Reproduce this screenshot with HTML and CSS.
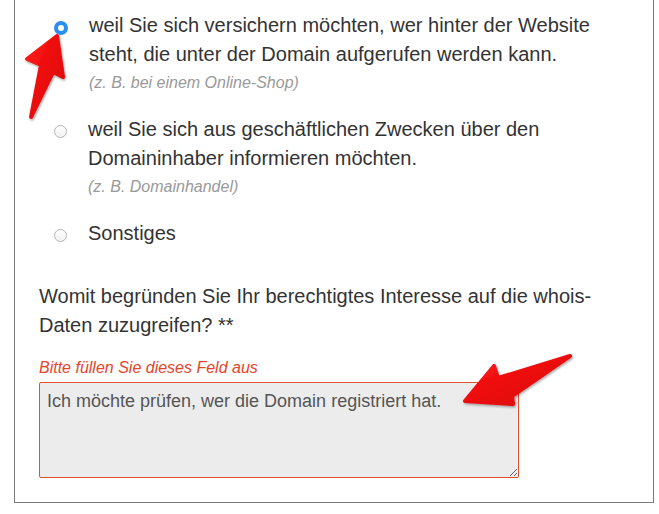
FILE: index.html
```html
<!DOCTYPE html>
<html lang="de">
<head>
<meta charset="utf-8">
<title>Whois</title>
<link rel="stylesheet" href="styles.css">
</head>
<body>
<div class="panel">
  <ul class="options">
    <li class="option">
      <span class="radio checked"></span>
      <div class="label">
        <div class="text">weil Sie sich versichern möchten, wer hinter der Website steht, die unter der Domain aufgerufen werden kann.</div>
        <div class="hint">(z. B. bei einem Online-Shop)</div>
      </div>
    </li>
    <li class="option">
      <span class="radio"></span>
      <div class="label">
        <div class="text">weil Sie sich aus geschäftlichen Zwecken über den Domaininhaber informieren möchten.</div>
        <div class="hint">(z. B. Domainhandel)</div>
      </div>
    </li>
    <li class="option">
      <span class="radio"></span>
      <div class="label">
        <div class="text">Sonstiges</div>
      </div>
    </li>
  </ul>
  <p class="question">Womit begründen Sie Ihr berechtigtes Interesse auf die whois-Daten zuzugreifen? **</p>
  <p class="error">Bitte füllen Sie dieses Feld aus</p>
  <textarea class="field">Ich möchte prüfen, wer die Domain registriert hat.</textarea>
</div>
<svg class="arrow arrow-up" width="659" height="514" viewBox="0 0 659 514">
  <defs>
    <linearGradient id="g1" x1="0" y1="0" x2="1" y2="1">
      <stop offset="0" stop-color="#ff1a1a"/>
      <stop offset="1" stop-color="#d80000"/>
    </linearGradient>
    <filter id="sh" x="-20%" y="-20%" width="140%" height="140%">
      <feDropShadow dx="1" dy="1.5" stdDeviation="1" flood-color="#000" flood-opacity="0.35"/>
    </filter>
  </defs>
  <path filter="url(#sh)" fill="url(#g1)" stroke="url(#g1)" stroke-width="4" stroke-linejoin="round"
        d="M57 36 L27 59 L41 65 L31 117 L53 72 L63 77 Z"/>
  <path filter="url(#sh)" fill="url(#g1)" stroke="url(#g1)" stroke-width="4" stroke-linejoin="round"
        d="M465 401 L513 404 L512 396 L570 356 L498 378 L494 366 Z"/>
</svg>
</body>
</html>
```
FILE: styles.css
```css
html, body {
  margin: 0;
  padding: 0;
  background: #fff;
}
body {
  font-family: "Liberation Sans", Arial, sans-serif;
  color: #333;
  width: 659px;
  height: 514px;
  overflow: hidden;
}
.panel {
  margin-left: 14px;
  width: 640px;
  border: 1px solid #7a7a7a;
  border-top: none;
  padding: 11px 0 24px 24px;
  box-sizing: border-box;
}
.options {
  list-style: none;
  margin: 0;
  padding: 0;
  display: flex;
  flex-direction: column;
  gap: 22px;
}
.option {
  display: flex;
  align-items: flex-start;
}
.radio {
  width: 13px;
  height: 13px;
  box-sizing: border-box;
  border-radius: 50%;
  border: 1px solid #b5b5b5;
  background: linear-gradient(#fff, #f0f0f0);
  margin: 10px 0 0 15px;
  flex: none;
}
.radio.checked {
  width: 14px;
  height: 14px;
  margin: 10px 0 0 15px;
  border: 4px solid #2a8ff0;
  background: #fff;
}
.label {
  margin-left: 21px;
}
.text {
  font-size: 20px;
  line-height: 28.5px;
  width: 530px;
}
.hint {
  font-size: 16px;
  line-height: 20px;
  font-style: italic;
  color: #999;
  margin-top: 5px;
}
.question {
  font-size: 20px;
  line-height: 29px;
  margin: 34px 0 0 0;
  width: 600px;
}
.error {
  font-size: 16px;
  line-height: 20px;
  font-style: italic;
  color: #e8442a;
  margin: 18px 0 4px 0;
}
.field {
  display: block;
  width: 480px;
  height: 96px;
  box-sizing: border-box;
  margin: 0;
  border: 1px solid #e4502d;
  border-radius: 2px;
  background: #ececec;
  color: #555;
  font-family: "Liberation Sans", Arial, sans-serif;
  font-size: 18px;
  line-height: 22px;
  padding: 7px 7px;
  resize: both;
}
.arrow {
  position: absolute;
  left: 0;
  top: 0;
  pointer-events: none;
}
```
